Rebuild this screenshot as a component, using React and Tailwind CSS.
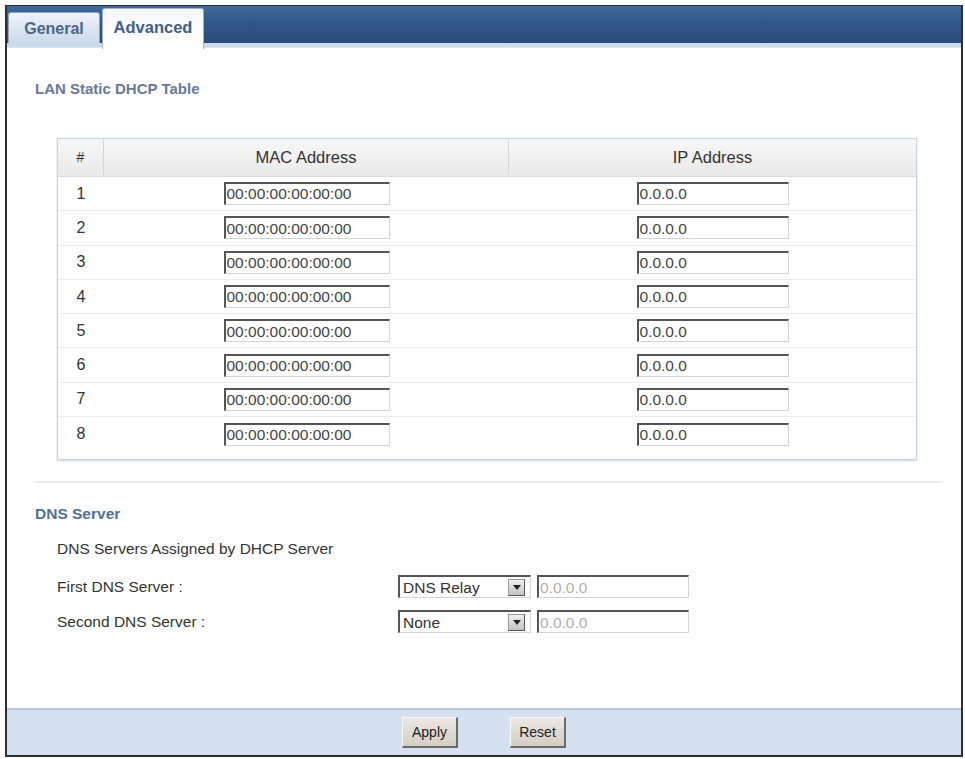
import React from 'react';

const rows = [1, 2, 3, 4, 5, 6, 7, 8];

function Field({ value, w, muted }) {
  return (
    <div
      className={`${w} h-[23px] bg-white border-t-2 border-l-2 border-r border-b border-t-[#555] border-l-[#555] border-r-[#d4d4d4] border-b-[#d4d4d4] flex items-center pl-[1px] text-[15.5px] leading-none ${
        muted ? 'text-[#b0b0b0]' : 'text-[#444]'
      }`}
    >
      {value}
    </div>
  );
}

function Select({ value }) {
  return (
    <div className="w-[133px] h-[23px] bg-white border-t-2 border-l-2 border-r border-b border-t-[#555] border-l-[#555] border-r-[#d4d4d4] border-b-[#d4d4d4] flex items-center justify-between pl-[3px] pr-[5px] text-[15.5px] leading-none text-[#333]">
      <span>{value}</span>
      <span className="w-[17px] h-[17px] bg-gradient-to-b from-[#eeeeee] to-[#c4c4c4] border border-[#999] border-b-[#555] border-r-[#555] flex items-center justify-center">
        <svg width="8" height="5" viewBox="0 0 8 5">
          <path d="M0 0h8L4 5z" fill="#222" />
        </svg>
      </span>
    </div>
  );
}

function Button({ children }) {
  return (
    <button className="w-[56px] h-[31px] bg-gradient-to-b from-[#ece9e2] to-[#d2cec4] border-t border-l border-t-[#f8f8f8] border-l-[#f8f8f8] border-r-2 border-b-2 border-r-[#6a6a6a] border-b-[#6a6a6a] text-[14px] text-[#222]">
      {children}
    </button>
  );
}

export default function App() {
  return (
    <div className="w-[965px] h-[759px] bg-white pt-[5px] pl-[5px] pr-[2px] font-['Liberation_Sans',Arial,sans-serif] overflow-hidden">
      <div className="h-[752px] border-t border-l-2 border-r-2 border-b-2 border-[#2e2e2e] flex flex-col">
        {/* Tabs */}
        <div className="h-[37px] bg-gradient-to-b from-[#41699c] via-[#2f5688] to-[#2b4b7a] flex items-end gap-[2px] px-[1px]">
          <div className="w-[92px] h-[31px] rounded-t-[3px] bg-gradient-to-b from-[#eef3fa] to-[#cbd9ea] border border-b-0 border-[#8fa6c2] flex items-start justify-center pt-[4px] text-[16px] font-bold text-[#4a6688]">
            General
          </div>
          <div className="relative z-10 -mb-[6px] w-[102px] h-[41px] rounded-t-[3px] bg-gradient-to-b from-[#f4f7fb] to-white border border-b-0 border-[#9fb3cc] flex items-start justify-center pt-[6px] text-[16.5px] font-bold text-[#3f5f88]">
            Advanced
          </div>
        </div>
        <div className="h-[5px] bg-[#cbdaee] border-b border-[#dde3ea]" />

        {/* Content */}
        <div className="flex-1 pl-[28px] pt-[32px] flex flex-col">
          <div className="text-[15px] font-bold text-[#66799a] leading-[17px]">LAN Static DHCP Table</div>

          <div className="ml-[22px] mt-[41px] w-[860px] border border-[#c4d3e6] shadow-[0_1px_2px_rgba(120,140,170,0.35)] pb-[8px]">
            <div className="h-[38px] flex bg-gradient-to-b from-[#f7f7f7] to-[#e9e9e9] border-b border-[#dcdcdc] text-[16.5px] text-[#333]">
              <div className="w-[46px] flex items-center justify-center border-r border-[#d6d6d6] text-[14px]">#</div>
              <div className="w-[405px] flex items-center justify-center border-r border-[#d6d6d6]">MAC Address</div>
              <div className="flex-1 flex items-center justify-center">IP Address</div>
            </div>
            {rows.map((n) => (
              <div key={n} className="h-[34.3px] flex items-center border-b border-[#ececec] last:border-b-0 text-[16px] text-[#333]">
                <div className="w-[46px] text-center">{n}</div>
                <div className="w-[405px] flex justify-center">
                  <Field value="00:00:00:00:00:00" w="w-[166px]" />
                </div>
                <div className="flex-1 flex justify-center">
                  <Field value="0.0.0.0" w="w-[152px]" />
                </div>
              </div>
            ))}
          </div>

          <div className="mt-[21px] w-[907px] h-[2px] bg-[#ececec]" />

          <div className="mt-[22px] text-[15.5px] font-bold text-[#4f6f99] leading-[17px]">DNS Server</div>
          <div className="pl-[22px] text-[15.5px] text-[#333]">
            <div className="mt-[18px] leading-[17px]">DNS Servers Assigned by DHCP Server</div>
            <div className="mt-[18px] flex items-center h-[23px]">
              <div className="w-[341px]">First DNS Server :</div>
              <Select value="DNS Relay" />
              <div className="ml-[6px]">
                <Field value="0.0.0.0" w="w-[152px]" muted />
              </div>
            </div>
            <div className="mt-[12px] flex items-center h-[23px]">
              <div className="w-[341px]">Second DNS Server :</div>
              <Select value="None" />
              <div className="ml-[6px]">
                <Field value="0.0.0.0" w="w-[152px]" muted />
              </div>
            </div>
          </div>
        </div>

        {/* Footer */}
        <div className="h-[47px] bg-[#d5e1f0] border-t-2 border-[#b9c9dd] flex items-center justify-center gap-[52px]">
          <Button>Apply</Button>
          <Button>Reset</Button>
        </div>
      </div>
    </div>
  );
}
